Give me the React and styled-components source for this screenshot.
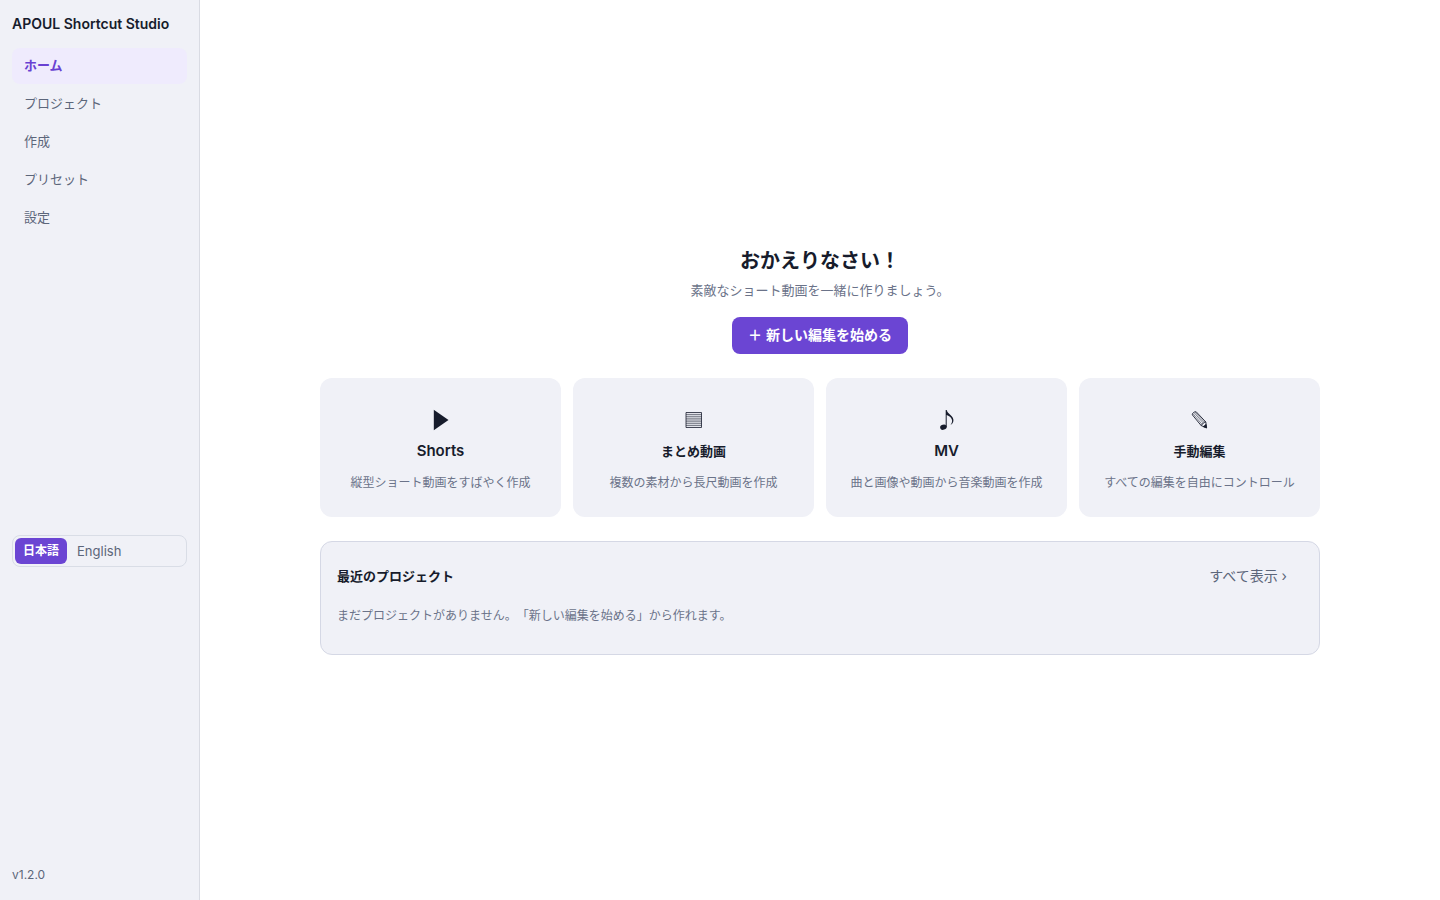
import React, { useState } from "react";
import styled, { createGlobalStyle } from "styled-components";

const navItems = ["ホーム", "プロジェクト", "作成", "プリセット", "設定"];

const PlayIcon = () => (
  <svg width="24" height="24" viewBox="0 0 24 24" aria-hidden="true">
    <path d="M4.8 1.8v20.4l14.7-10.2z" fill="currentColor" />
  </svg>
);

const ListIcon = () => (
  <svg width="24" height="24" viewBox="0 0 24 24" aria-hidden="true">
    <g fill="none" stroke="currentColor">
      <path d="M4 4.5h15.5v15H4z" strokeWidth="0.8" />
      <path
        d="M4 6.4h15.5M4 8.3h15.5M4 10.200h15.5M4 12h15.5M4 13.800h15.5M4 15.700h15.5M4 17.600h15.5"
        strokeWidth="0.6"
      />
    </g>
  </svg>
);

const NoteIcon = () => (
  <svg width="24" height="24" viewBox="0 0 24 24" aria-hidden="true">
    <ellipse
      cx="8.4"
      cy="19.2"
      rx="3.3"
      ry="2.5"
      transform="rotate(-18 8.4 19.2)"
      fill="currentColor"
    />
    <path
      d="M10.7 2h1c.3 1.8 1.700 3 3.500 4.700 2.300 2.100 3.600 3.900 3.200 6.400-.3 1.900-1.500 3.300-2.900 3.900 1.200-1.500 1.900-3.100 1.500-4.900-.5-2.200-2.300-3.900-5.300-5V19.200h-1z"
      fill="currentColor"
    />
  </svg>
);

const PencilIcon = () => (
  <svg width="24" height="24" viewBox="0 0 24 24" aria-hidden="true">
    <g
      fill="none"
      stroke="currentColor"
      strokeWidth="0.9"
      strokeLinejoin="round"
    >
      <path d="M4.3 6.8C4.3 5 6.2 3.5 8.2 3.8L17.8 14 18.6 19.800 13.2 17.600z" />
      <path d="M13.2 17.6c.2-1.100 1-1.600 1.800-1.700.1-1.100 1.400-2.100 2.800-1.900" />
      <path
        d="M4.900 5.600l9.200 10.800M6.200 4.800l9.300 10.500M7.300 4.300l9.400 10.200"
        strokeWidth="0.5"
      />
    </g>
    <path
      d="M18 16.3l.6 3.700-3.500-1.300z"
      fill="currentColor"
      stroke="currentColor"
      strokeWidth="0.6"
    />
  </svg>
);

const modes = [
  {
    title: "Shorts",
    lang: "en",
    text: "縦型ショート動画をすばやく作成",
    icon: <PlayIcon />,
  },
  {
    title: "まとめ動画",
    lang: "ja",
    text: "複数の素材から長尺動画を作成",
    icon: <ListIcon />,
  },
  {
    title: "MV",
    lang: "en",
    text: "曲と画像や動画から音楽動画を作成",
    icon: <NoteIcon />,
  },
  {
    title: "手動編集",
    lang: "ja",
    text: "すべての編集を自由にコントロール",
    icon: <PencilIcon />,
  },
];

const App = () => {
  const [page, setPage] = useState("ホーム");
  const [lang, setLang] = useState("日本語");
  return (
    <Wrapper>
      <GlobalStyle />
      <Sidebar>
        <div>
          <Brand>APOUL Shortcut Studio</Brand>
          <Nav>
            {navItems.map((item) => (
              <NavLink
                key={item}
                href="#"
                $active={item === page}
                onClick={() => setPage(item)}
              >
                {item}
              </NavLink>
            ))}
          </Nav>
        </div>
        <LangSwitch>
          {["日本語", "English"].map((item) => (
            <LangButton
              key={item}
              type="button"
              $active={item === lang}
              onClick={() => setLang(item)}
            >
              {item}
            </LangButton>
          ))}
        </LangSwitch>
        <Version>v1.2.0</Version>
      </Sidebar>
      <Main>
        <Content>
          <Hero>
            <h1>おかえりなさい！</h1>
            <p>素敵なショート動画を一緒に作りましょう。</p>
            <StartButton type="button">
              <span>＋</span>新しい編集を始める
            </StartButton>
          </Hero>
          <Modes>
            {modes.map(({ title, lang, text, icon }) => (
              <ModeCard key={title} type="button">
                {icon}
                <ModeTitle $latin={lang === "en"}>{title}</ModeTitle>
                <small>{text}</small>
              </ModeCard>
            ))}
          </Modes>
          <Recent>
            <header>
              <h2>最近のプロジェクト</h2>
              <ShowAll type="button">すべて表示 ›</ShowAll>
            </header>
            <p>まだプロジェクトがありません。「新しい編集を始める」から作れます。</p>
          </Recent>
        </Content>
      </Main>
    </Wrapper>
  );
};

const GlobalStyle = createGlobalStyle`
  * {
    box-sizing: border-box;
  }
  body {
    margin: 0;
    background: #fff;
    color: #171c2c;
    font-family: Inter, "Noto Sans CJK JP", sans-serif;
    font-size: 13px;
    line-height: 20px;
    text-spacing-trim: space-all;
  }
  h1, h2, p {
    margin: 0;
  }
  button {
    font: inherit;
    color: inherit;
    border: 0;
    cursor: pointer;
  }
`;

const Wrapper = styled.div`
  display: flex;
  min-height: 100vh;
`;

const Sidebar = styled.aside`
  display: flex;
  flex-direction: column;
  justify-content: space-between;
  flex: 0 0 200px;
  padding: 12px 12px 14px;
  background: #f0f1f7;
  border-right: 1px solid #d9dbe3;
`;

const Brand = styled.div`
  padding: 2px 0;
  margin-bottom: 12px;
  font-size: 14px;
  font-weight: 600;
`;

const Nav = styled.nav`
  display: flex;
  flex-direction: column;
  gap: 2px;
  padding-bottom: 2px;
`;

const NavLink = styled.a`
  padding: 7px 12px 9px;
  border-radius: 8px;
  text-decoration: none;
  font-weight: ${({ $active }) => ($active ? 600 : 400)};
  color: ${({ $active }) => ($active ? "#6941d2" : "#5c667a")};
  background: ${({ $active }) => ($active ? "#efebfd" : "transparent")};
`;

const LangSwitch = styled.div`
  display: flex;
  gap: 2px;
  padding: 2px;
  border: 1px solid #d9dde6;
  border-radius: 8px;
`;

const LangButton = styled.button`
  padding: 3px 8px;
  border-radius: 6px;
  font-size: ${({ $active }) => ($active ? "12px" : "13px")};
  font-weight: ${({ $active }) => ($active ? 600 : 400)};
  color: ${({ $active }) => ($active ? "#fff" : "#5c667a")};
  background: ${({ $active }) => ($active ? "#6b45d3" : "transparent")};
`;

const Version = styled.div`
  font-size: 12px;
  line-height: 22px;
  color: #5c667a;
`;

const Main = styled.main`
  display: flex;
  flex: 1;
  align-items: center;
  justify-content: center;
  padding: 24px;
`;

const Content = styled.div`
  display: flex;
  flex-direction: column;
  gap: 24px;
  width: 100%;
  max-width: 1000px;
`;

const Hero = styled.section`
  display: flex;
  flex-direction: column;
  align-items: center;
  h1 {
    font-size: 20px;
    line-height: 30px;
    font-weight: 700;
  }
  p {
    margin: 4px 0 17px;
    color: #6b7389;
  }
`;

const StartButton = styled.button`
  display: flex;
  gap: 4px;
  padding: 7px 16px 9px;
  border-radius: 8px;
  font-size: 14px;
  line-height: 21px;
  font-weight: 600;
  color: #fff;
  background: #6b45d3;
`;

const Modes = styled.section`
  display: grid;
  grid-template-columns: repeat(4, 1fr);
  gap: 12px;
`;

const ModeCard = styled.button`
  display: flex;
  flex-direction: column;
  align-items: center;
  padding: 30px 12px 24px;
  border-radius: 12px;
  background: #f0f1f7;
  small {
    font-size: 12px;
    color: #6b7389;
  }
`;

const ModeTitle = styled.strong`
  margin: 9px 0 12px;
  font-size: ${({ $latin }) => ($latin ? "15px" : "13px")};
  font-weight: 600;
`;

const Recent = styled.section`
  padding: 16px 16px 28px;
  background: #f0f1f7;
  border: 1px solid #d5d8e5;
  border-radius: 12px;
  header {
    display: flex;
    align-items: center;
    justify-content: space-between;
    margin-bottom: 12px;
  }
  h2 {
    font-size: 13px;
    font-weight: 600;
  }
  p {
    font-size: 12px;
    color: #6b7389;
  }
`;

const ShowAll = styled.button`
  padding: 8px 16px;
  font-size: 14px;
  color: #5c667a;
  background: transparent;
`;

export default App;
